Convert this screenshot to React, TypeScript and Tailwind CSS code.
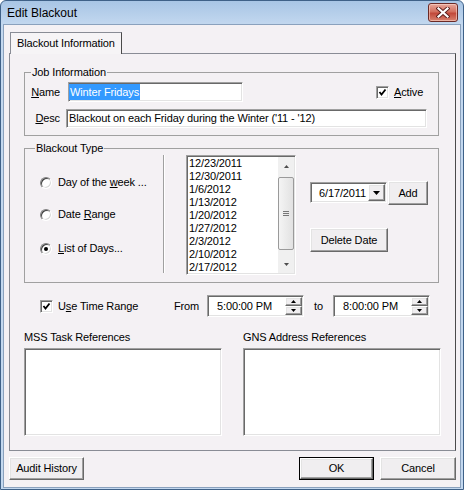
import React from "react";
import clsx from "clsx";

// classic win32 control edges
const sunken =
    "bg-white border border-t-[#a0a0a0] border-l-[#a0a0a0] border-r-white border-b-white shadow-[inset_1px_1px_0_#696969,inset_-1px_-1px_0_#e3e3e3]";
const raised =
    "bg-[#f0eef0] border border-t-white border-l-white border-r-[#696969] border-b-[#696969] shadow-[inset_-1px_-1px_0_#a0a0a0,inset_1px_1px_0_#e3e3e3]";

const dates = [
    "12/23/2011",
    "12/30/2011",
    "1/6/2012",
    "1/13/2012",
    "1/20/2012",
    "1/27/2012",
    "2/3/2012",
    "2/10/2012",
    "2/17/2012",
];

function Arrow({ dir, className }: { dir: "up" | "down"; className?: string }) {
    return (
        <svg width="7" height="4" viewBox="0 0 7 4" className={className}>
            {dir === "down" ? (
                <polygon points="0,0 7,0 3.5,4" fill="currentColor" />
            ) : (
                <polygon points="0,4 7,4 3.5,0" fill="currentColor" />
            )}
        </svg>
    );
}

function Button({
    children,
    className,
    isDefault,
}: {
    children: React.ReactNode;
    className?: string;
    isDefault?: boolean;
}) {
    if (isDefault) {
        return (
            <div className={clsx("border border-black flex", className)}>
                <div className={clsx("flex-1 flex items-center justify-center", raised)}>{children}</div>
            </div>
        );
    }
    return <div className={clsx("flex items-center justify-center", raised, className)}>{children}</div>;
}

function Checkbox({ className }: { className?: string }) {
    return (
        <div className={clsx("w-[13px] h-[13px] shrink-0 flex items-center justify-center", sunken, className)}>
            <svg width="9" height="9" viewBox="0 0 9 9">
                <polyline points="1.5,4 3.5,6.5 7.5,1.5" fill="none" stroke="#000" strokeWidth="1.8" />
            </svg>
        </div>
    );
}

function Radio({ checked }: { checked?: boolean }) {
    return (
        <div className="w-[12px] h-[12px] shrink-0 rounded-full border border-t-[#808080] border-l-[#808080] border-r-[#ffffff] border-b-[#ffffff] bg-white shadow-[inset_1px_1px_0_#404040,inset_-1px_-1px_0_#d8d8d8] flex items-center justify-center">
            {checked && <div className="w-[4px] h-[4px] rounded-full bg-black" />}
        </div>
    );
}

function SpinField({ value }: { value: string }) {
    return (
        <div className={clsx("w-[97px] h-[22px] flex", sunken)}>
            <span className="flex-1 pl-[9px] pt-[3px] leading-[14px]">{value}</span>
            <div className="w-[17px] flex flex-col pt-[1px] pb-[1px] mr-[1px]">
                <div className={clsx("flex-1 flex items-center justify-center text-black", raised)}>
                    <Arrow dir="up" className="w-[5px] h-[3px]" />
                </div>
                <div className={clsx("flex-1 flex items-center justify-center text-black", raised)}>
                    <Arrow dir="down" className="w-[5px] h-[3px]" />
                </div>
            </div>
        </div>
    );
}

function CloseButton() {
    return (
        <div className="mt-[2px] mr-[5px] w-[30px] h-[19px] rounded-[3px] border border-[#6b2a26] bg-[linear-gradient(#e8a89c,#d2705f_45%,#c2493a_55%,#d8826f)] shadow-[inset_0_0_0_1px_rgba(255,220,210,0.55)] flex items-center justify-center">
            <svg width="14" height="11" viewBox="0 0 14 11">
                <path d="M2.5 1.5 L11.5 9.5 M11.5 1.5 L2.5 9.5" stroke="#5b1f1c" strokeWidth="4" strokeLinecap="square" />
                <path d="M2.5 1.5 L11.5 9.5 M11.5 1.5 L2.5 9.5" stroke="#fff" strokeWidth="2.2" strokeLinecap="square" />
            </svg>
        </div>
    );
}

export default function App() {
    return (
        <div className="w-[464px] h-[490px] flex flex-col rounded-t-[6px] border border-[#3f6188] bg-[linear-gradient(#a8c5e5,#c3d8ef_24px,#c3d8ef)] font-['Liberation_Sans',Arial,sans-serif] text-[11px] leading-[13px] tracking-[-0.13px] text-black">
            {/* title bar */}
            <div className="h-[23px] flex items-start justify-between">
                <span className="pl-[6px] pt-[5px] text-[12px] leading-[14px] tracking-normal">Edit Blackout</span>
                <CloseButton />
            </div>

            <div className="mx-[2px] mb-[1px] flex-1 border border-[#8aa1bd] bg-[#f4f1f4] flex flex-col">
                {/* tab strip */}
                <div className="pt-[7px] pl-[6px] flex">
                    <div className="relative z-10 -mb-[1px] w-[112px] h-[22px] border-l border-t border-r border-l-[#898c95] border-t-[#898c95] border-r-[#4a4a4a] bg-[#f6f4f6] pl-[6px] pt-[4px]">
                        Blackout Information
                    </div>
                </div>

                <div className="ml-[5px] w-[447px] h-[398px] border border-[#898c95] border-r-[#4a4a4a] flex flex-col">
                    {/* Job Information */}
                    <fieldset className="ml-[14px] mt-[12px] w-[415px] h-[70px] border border-[#a0a0a0]">
                        <legend className="ml-[6px] px-[1px] leading-[13px]">Job Information</legend>
                        <div className="mt-[3px] h-[20px] flex items-center">
                            <span className="w-[35px] text-right">
                                <u>N</u>ame
                            </span>
                            <div className={clsx("ml-[8px] w-[175px] h-[20px] flex items-center", sunken)}>
                                <span className="h-[16px] leading-[16px] px-[1px] bg-[#3399ff] text-white">
                                    Winter Fridays
                                </span>
                            </div>
                            <Checkbox className="ml-[133px]" />
                            <span className="ml-[5px]">
                                <u>A</u>ctive
                            </span>
                        </div>
                        <div className="mt-[7px] h-[19px] flex items-center">
                            <span className="w-[35px] text-right">
                                <u>D</u>esc
                            </span>
                            <div className={clsx("ml-[6px] w-[361px] h-[19px] flex items-center pl-[2px]", sunken)}>
                                Blackout on each Friday during the Winter ('11 - '12)
                            </div>
                        </div>
                    </fieldset>

                    {/* Blackout Type */}
                    <fieldset className="ml-[14px] mt-[6px] w-[415px] h-[141px] border border-[#a0a0a0]">
                        <legend className="ml-[10px] px-[1px] leading-[13px]">Blackout Type</legend>
                        <div className="flex items-start">
                            <div className="w-[138px] pl-[15px] pt-[21px] flex flex-col">
                                <div className="h-[13px] flex items-center">
                                    <Radio />
                                    <span className="ml-[6px]">
                                        Day of the <u>w</u>eek ...
                                    </span>
                                </div>
                                <div className="mt-[19px] h-[13px] flex items-center">
                                    <Radio />
                                    <span className="ml-[6px]">
                                        Date <u>R</u>ange
                                    </span>
                                </div>
                                <div className="mt-[21px] h-[13px] flex items-center">
                                    <Radio checked />
                                    <span className="ml-[6px]">
                                        <u>L</u>ist of Days...
                                    </span>
                                </div>
                            </div>

                            <div className="w-[2px] h-[118px] border-l border-l-[#a0a0a0] border-r border-r-white" />

                            {/* listbox */}
                            <div className={clsx("ml-[21px] w-[110px] h-[120px] flex overflow-hidden", sunken)}>
                                <div className="flex-1 pl-[2px] pt-[1px] flex flex-col leading-[13px]">
                                    {dates.map((d) => (
                                        <span key={d}>{d}</span>
                                    ))}
                                </div>
                                <div className="w-[16px] my-[1px] mr-[1px] bg-[#f0f0f0] flex flex-col text-[#4d4d4d]">
                                    <div className="h-[18px] flex items-center justify-center">
                                        <Arrow dir="up" className="w-[5px] h-[3px]" />
                                    </div>
                                    <div className="mt-[2px] h-[73px] rounded-[2px] border border-[#9a9a9a] bg-[linear-gradient(90deg,#f4f4f4,#e2e2e2)] flex flex-col items-center justify-center gap-[1px]">
                                        <div className="w-[6px] h-[1px] bg-[#777]" />
                                        <div className="w-[6px] h-[1px] bg-[#777]" />
                                        <div className="w-[6px] h-[1px] bg-[#777]" />
                                    </div>
                                    <div className="flex-1" />
                                    <div className="h-[18px] flex items-center justify-center">
                                        <Arrow dir="down" className="w-[5px] h-[3px]" />
                                    </div>
                                </div>
                            </div>

                            <div className="ml-[14px] pt-[26px] flex flex-col">
                                <div className="flex items-start">
                                    <div className={clsx("mt-[1px] w-[77px] h-[21px] flex", sunken)}>
                                        <span className="flex-1 pl-[8px] pt-[4px] overflow-hidden whitespace-nowrap">6/17/2011</span>
                                        <div className={clsx("w-[17px] my-[1px] mr-[1px] flex items-center justify-center", raised)}>
                                            <Arrow dir="down" />
                                        </div>
                                    </div>
                                    <Button className="ml-[1px] w-[40px] h-[24px]">Add</Button>
                                </div>
                                <Button className="mt-[23px] w-[78px] h-[24px]">Delete Date</Button>
                            </div>
                        </div>
                    </fieldset>

                    {/* time range */}
                    <div className="mt-[12px] ml-[30px] h-[22px] flex items-center">
                        <div className="w-[134px] flex items-center">
                            <Checkbox />
                            <span className="ml-[5px]">
                                U<u>s</u>e Time Range
                            </span>
                        </div>
                        <span className="w-[33px]">From</span>
                        <SpinField value="5:00:00 PM" />
                        <span className="ml-[10px] w-[19px]">to</span>
                        <SpinField value="8:00:00 PM" />
                    </div>

                    {/* references */}
                    <div className="mt-[14px] ml-[14px] flex gap-[21px]">
                        <div className="w-[198px] flex flex-col">
                            <span>MSS Task References</span>
                            <div className={clsx("mt-[4px] h-[88px]", sunken)} />
                        </div>
                        <div className="w-[198px] flex flex-col">
                            <span>GNS Address References</span>
                            <div className={clsx("mt-[4px] h-[88px]", sunken)} />
                        </div>
                    </div>
                </div>

                {/* dialog buttons */}
                <div className="mt-[6px] pl-[5px] pr-[4px] flex">
                    <Button className="w-[75px] h-[23px]">Audit History</Button>
                    <div className="flex-1" />
                    <Button isDefault className="w-[75px] h-[23px]">
                        OK
                    </Button>
                    <Button className="ml-[6px] w-[76px] h-[23px]">Cancel</Button>
                </div>
            </div>
        </div>
    );
}
